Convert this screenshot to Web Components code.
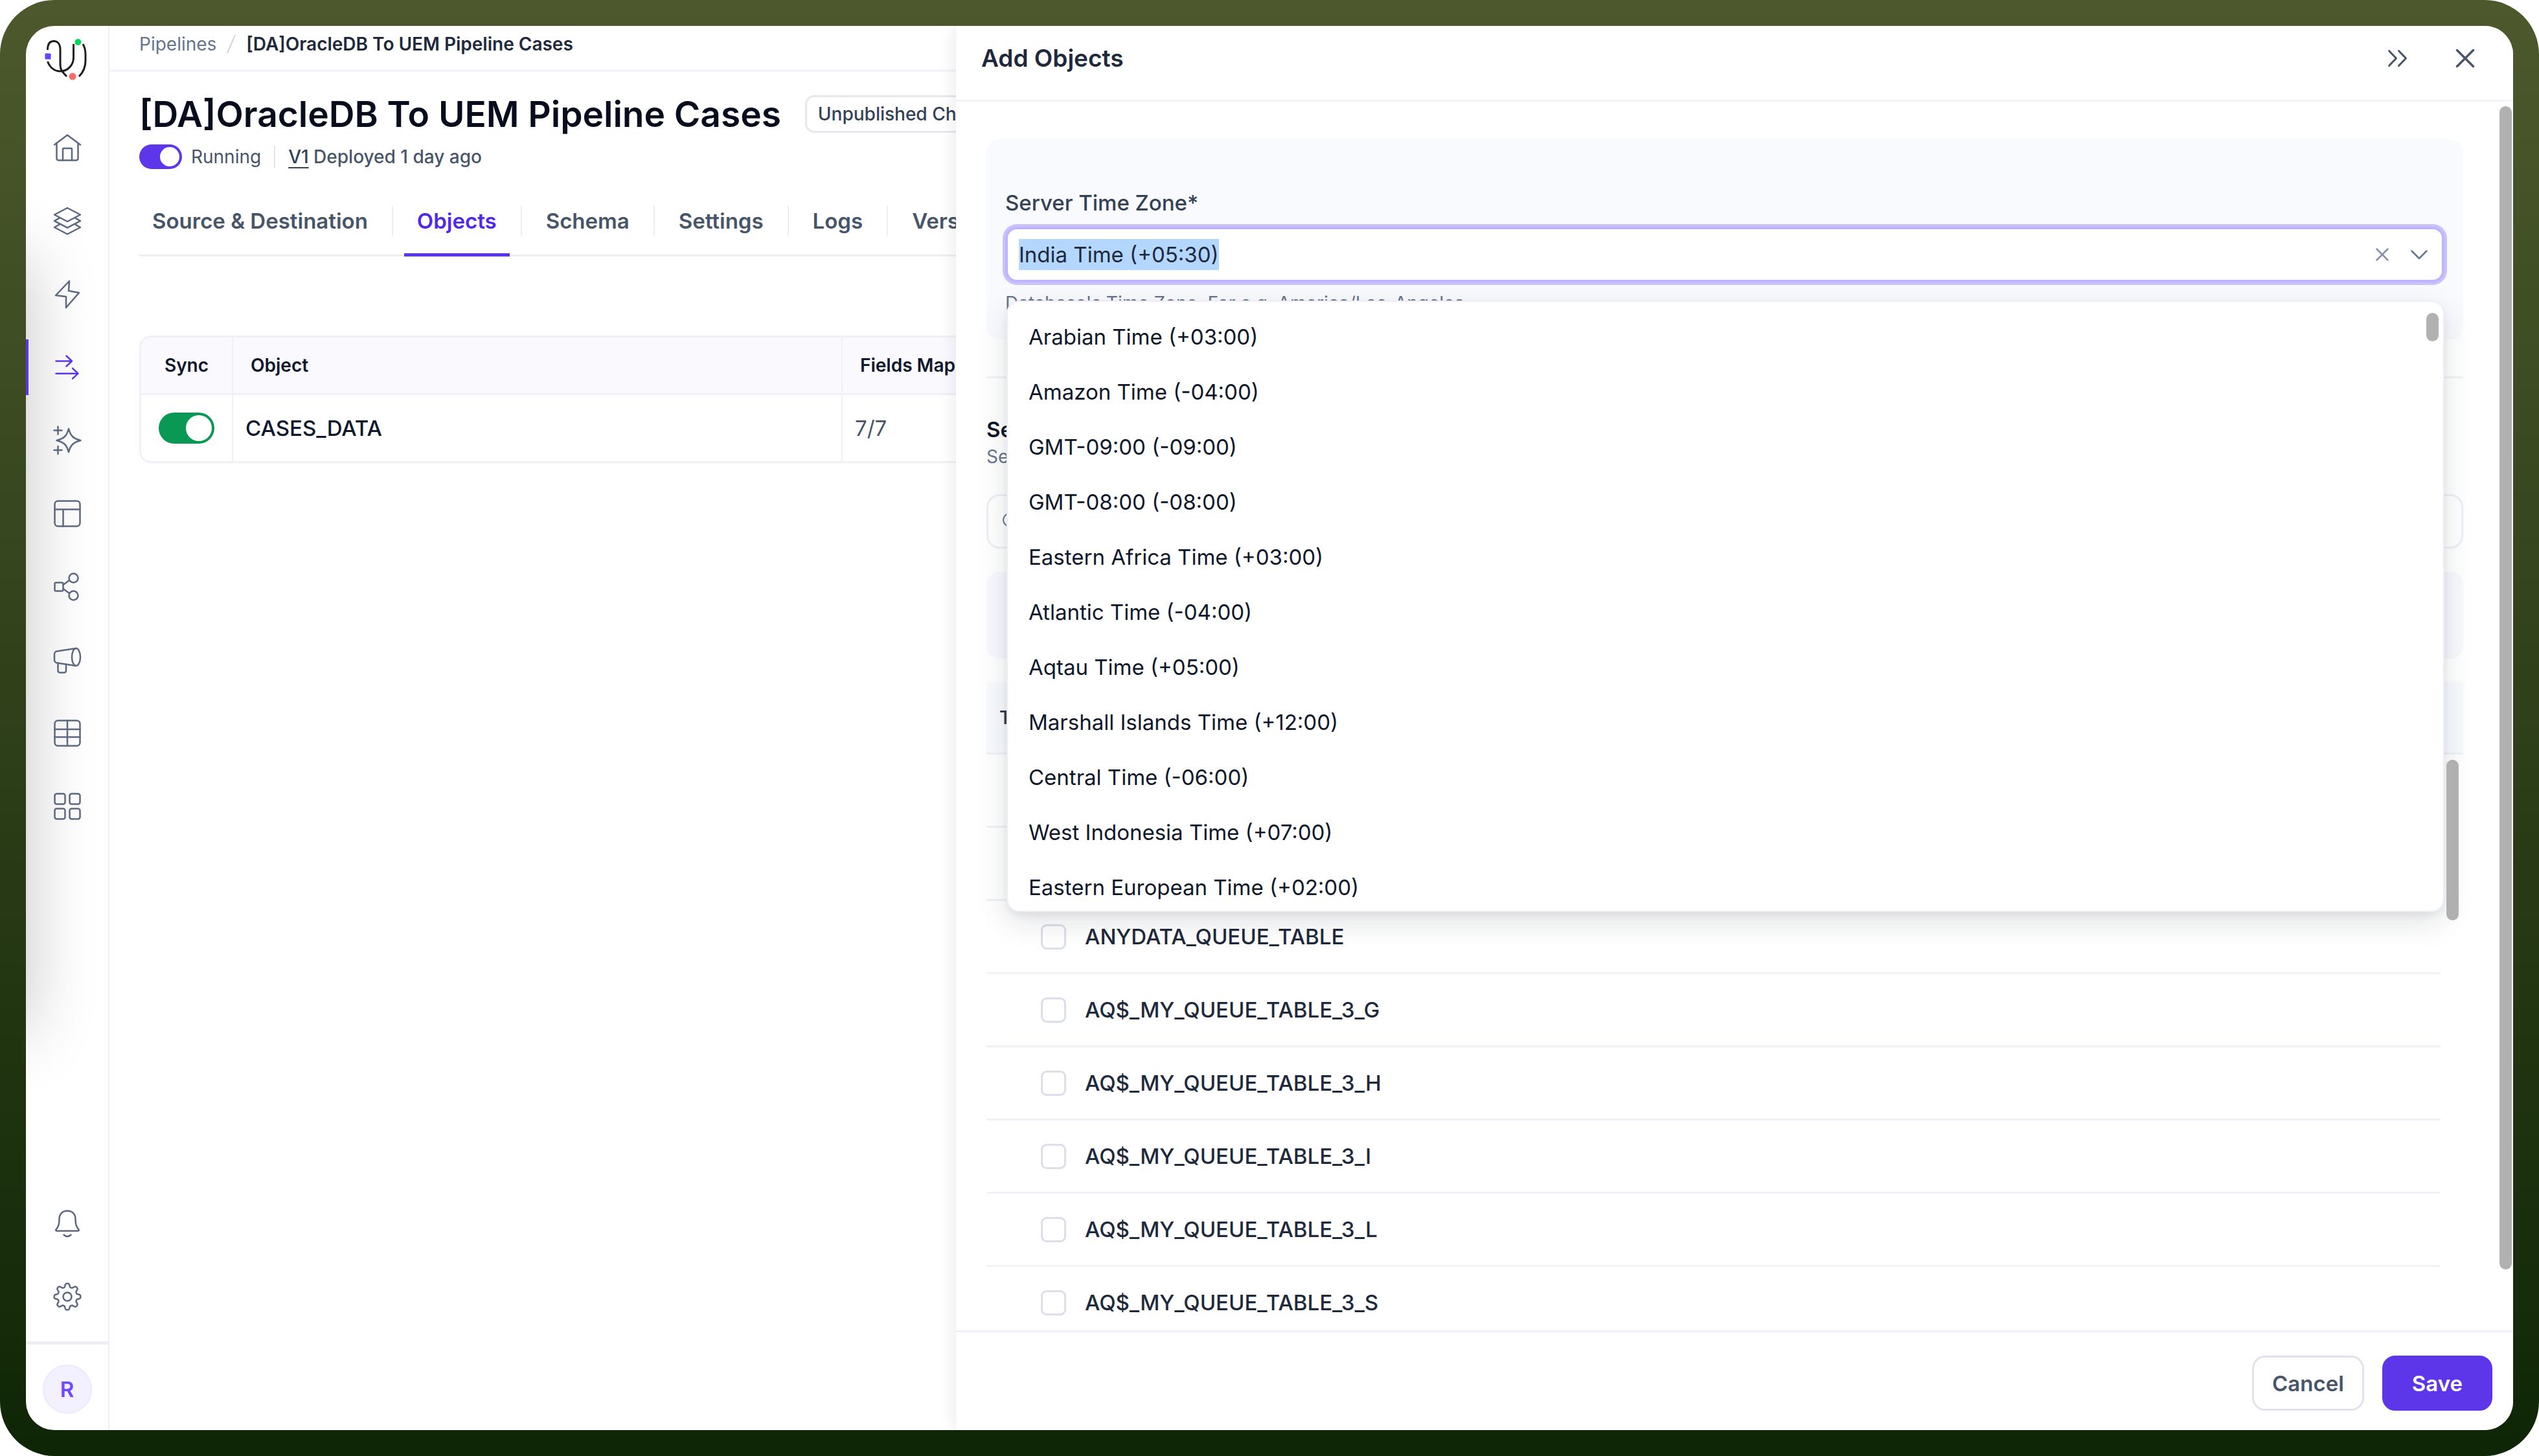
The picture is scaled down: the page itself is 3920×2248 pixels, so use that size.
<!DOCTYPE html>
<html lang="en">
<head>
<meta charset="utf-8">
<title>Pipelines</title>
<style>
  html, body {
    margin: 0;
    height: 100%;
    background: #ffffff;
  }

  body {
    font-family: Inter, "Liberation Sans", sans-serif;
    color: #0f172a;
  }
</style>
</head>
<body>
<app-frame>
  <nav-rail slot="nav"></nav-rail>
  <pipeline-page></pipeline-page>
  <objects-drawer slot="drawer"></objects-drawer>
</app-frame>

<script>
// Outline of the settings cog: a circle whose radius swells eight times
function cogPath() {
  const points = [];
  for (let i = 0; i < 160; i++) {
    const a = (i / 160) * Math.PI * 2;
    const r = 17.7 + 2.8 * Math.tanh(1.8 * Math.cos(8 * a));
    points.push(`${(24 + r * Math.sin(a)).toFixed(2)} ${(24 - r * Math.cos(a)).toFixed(2)}`);
  }
  return `M${points.join('L')}Z`;
}

const ICONS = {
  home: '<path d="M4 19.5 24 4.5 44 19.5"/><path d="M7.5 17v23.5a3 3 0 0 0 3 3h27a3 3 0 0 0 3-3V17"/><path d="M17 43.5V26a1 1 0 0 1 1-1h12a1 1 0 0 1 1 1v17.5"/>',
  layers: '<path d="M24 4 44 14.5 24 25 4 14.5Z"/><path d="M12 19.5 4 24.2l20 10.5 20-10.5-8-4.7"/><path d="M12 29.3 4 34l20 10.5L44 34l-8-4.7"/>',
  bolt: '<path d="M27 4 6 26l16 2v17l20-23-16-3Z"/>',
  flow: '<path d="M6.5 14.5H31M22.5 6.5l8.5 8-8.5 8M6.5 33.7h34M32 25.7l8.5 8-8.5 8"/>',
  sparkle: '<path d="M26 6c3 11 7 15 18.5 18C33 27 29 31 26 42c-3-11-7-15-18.5-18C19 21 23 17 26 6Z"/><path d="M3.5 8.5h12M9.5 2.5v12M3.5 39h12M9.5 33v12"/>',
  layout: '<rect x="4.5" y="4.5" width="39" height="39" rx="5"/><path d="M4.5 17.5h39M17.5 17.5v26"/>',
  share: '<rect x="4.5" y="17.5" width="13" height="13" rx="2"/><circle cx="33.5" cy="10.5" r="7"/><circle cx="33.5" cy="37.5" r="7"/><path d="M17.5 21 27 14M17.5 27l9.5 7"/>',
  megaphone: '<ellipse cx="37.5" cy="19.5" rx="6.5" ry="13.5"/><path d="M37.5 6 8 10.5a4.5 4.5 0 0 0-4 4.5v9a4.5 4.5 0 0 0 4 4.5L37.5 33"/><path d="M9.5 28.7V40.5a3 3 0 0 0 3 3h6.5a3 3 0 0 0 3-3V30.7"/>',
  table: '<rect x="4.5" y="4.5" width="39" height="39" rx="5"/><path d="M4.5 18h39M4.5 30h39M24 4.5v39"/>',
  grid: '<rect x="4.5" y="4.5" width="16" height="16" rx="3"/><rect x="27.5" y="4.5" width="16" height="16" rx="3"/><rect x="4.5" y="27.5" width="16" height="16" rx="3"/><rect x="27.5" y="27.5" width="16" height="16" rx="3"/>',
  bell: '<path d="M24 4.5c-8 0-12.5 5.5-12.5 13 0 9-2 12-5 16-.6.9-.2 2 1 2h33c1.200 0 1.600-1.100 1-2-3-4-5-7-5-16 0-7.500-4.500-13-12.500-13Z"/><path d="M18.500 41.500q5.500 5 11 0"/>',
  gear: `<path d="${cogPath()}"/><circle cx="24" cy="24" r="6.5"/>`,
  expand: '<path d="M10.5 12.5 21.5 24 10.5 35.5M25.5 12.5 36.5 24 25.5 35.5" stroke-width="3"/>',
  close: '<path d="M11.5 11.5l25 25M36.5 11.5l-25 25" stroke-width="3.5"/>',
  clear: '<path d="M15.5 15.5l17 17M32.5 15.5l-17 17"/>',
  chevron: '<path d="M12.5 18.5 24 30l11.5-11.5"/>',
  search: '<circle cx="21" cy="21" r="13"/><path d="M31 31l11 11"/>'
};

class UiIcon extends HTMLElement {
  constructor() {
    super();
    this.attachShadow({ mode: 'open' });
  }

  connectedCallback() {
    this.shadowRoot.innerHTML = `
      <style>
        :host {
          display: inline-flex;
          width: 48px;
          height: 48px;
          flex: none;
        }

        svg {
          width: 100%;
          height: 100%;
          fill: none;
          stroke: currentColor;
          stroke-width: 2.5;
          stroke-linecap: round;
          stroke-linejoin: round;
        }
      </style>
      <svg viewBox="0 0 48 48" aria-hidden="true">${ICONS[this.getAttribute('name')]}</svg>
    `;
  }
}

class AppFrame extends HTMLElement {
  constructor() {
    super();
    this.attachShadow({ mode: 'open' });
    this.shadowRoot.innerHTML = `
      <style>
        :host {
          display: block;
          box-sizing: border-box;
          height: 100vh;
          padding: 40px;
          border-radius: 84px;
          background: linear-gradient(#4d592c, #0f2606);
        }

        .window {
          position: relative;
          display: flex;
          height: 100%;
          border-radius: 44px;
          background: #ffffff;
          overflow: hidden;
        }

        main {
          flex: 1;
          min-width: 0;
        }
      </style>
      <div class="window">
        <slot name="nav"></slot>
        <main><slot></slot></main>
        <slot name="drawer"></slot>
      </div>
    `;
  }
}

class NavRail extends HTMLElement {
  constructor() {
    super();
    this.attachShadow({ mode: 'open' });
  }

  connectedCallback() {
    const items = [
      ['home', 'Home'], ['layers', 'Models'], ['bolt', 'Activations'], ['flow', 'Pipelines'],
      ['sparkle', 'AI'], ['layout', 'Layouts'], ['share', 'Connections'], ['megaphone', 'Campaigns'],
      ['table', 'Tables'], ['grid', 'Apps']
    ];

    const link = ([icon, label]) => `
      <a href="#${icon}" aria-label="${label}" class="${icon === 'flow' ? 'active' : ''}">
        <ui-icon name="${icon}"></ui-icon>
      </a>`;

    this.shadowRoot.innerHTML = `
      <style>
        :host {
          position: relative;
          display: flex;
          flex-direction: column;
          flex: none;
          box-sizing: border-box;
          width: 129px;
          border-right: 2px solid #eeeff6;
          overflow: hidden;
        }

        /* soft shade cast along the left edge */
        :host::before {
          content: "";
          position: absolute;
          left: -200px;
          top: 360px;
          width: 200px;
          height: 1190px;
          box-shadow: 0 0 110px rgba(0, 0, 0, 0.24);
        }

        .logo {
          display: flex;
          padding: 18px 0 0 26px;
          height: 113px;
        }

        .logo svg {
          width: 72px;
          height: 68px;
        }

        nav {
          position: relative;
          display: flex;
          flex-direction: column;
        }

        nav.bottom {
          margin-top: auto;
          padding-bottom: 13px;
        }

        a {
          display: flex;
          align-items: center;
          justify-content: center;
          height: 113px;
          color: #5b6880;
        }

        a.active {
          color: #5d36ea;
        }

        a.active::before {
          content: "";
          position: absolute;
          left: 0;
          width: 4px;
          height: 86px;
          background: #5d36ea;
        }

        .account {
          display: flex;
          justify-content: center;
          padding: 31px 0 25px;
          border-top: 5px solid #eeeff4;
        }

        button {
          box-sizing: border-box;
          width: 76px;
          height: 76px;
          padding: 0;
          border: 2px solid #ece9fe;
          border-radius: 50%;
          background: #f3f1ff;
          color: #6d4aff;
          font: 600 33px/40px Inter, sans-serif;
        }
      </style>
      <div class="logo">
        <svg viewBox="66 58 72 68" fill="none" stroke="#1c1c1c" stroke-width="3" role="img" aria-label="Logo">
          <path d="M73.5 77C73.5 67 77 63.5 83 63.5S93 68 93 77V100C93 108 97 112 103 118"/>
          <path d="M73.5 95C77 104 84 110 93 110C105 110 113.5 100 113.5 89V68"/>
          <path d="M128 68C131 73 132 78 132 84V94C132 104 128 112 122 118"/>
          <circle cx="120.5" cy="65" r="5" fill="#0bd75f" stroke="none"/>
          <rect x="69.5" y="82.5" width="9" height="9" fill="#5f45ff" stroke="none"/>
          <circle cx="112" cy="118" r="5.5" fill="#ff6b6b" stroke="none"/>
        </svg>
      </div>
      <nav aria-label="Main">${items.map(link).join('')}</nav>
      <nav class="bottom" aria-label="Account">
        ${link(['bell', 'Notifications'])}
        ${link(['gear', 'Settings'])}
      </nav>
      <div class="account"><button type="button">R</button></div>
    `;
  }
}

class UiSwitch extends HTMLElement {
  constructor() {
    super();
    this.attachShadow({ mode: 'open' });
  }

  connectedCallback() {
    this.shadowRoot.innerHTML = `
      <style>
        :host {
          display: inline-flex;
          --w: 66px;
          --h: 38px;
          --on: #5d36ea;
        }

        :host([size="large"]) {
          --w: 86px;
          --h: 48px;
          --on: #0a9955;
        }

        label {
          display: inline-flex;
          align-items: center;
          gap: 14px;
          font-size: 28px;
          line-height: 40px;
        }

        input {
          appearance: none;
          display: flex;
          box-sizing: border-box;
          justify-content: flex-end;
          width: var(--w);
          height: var(--h);
          margin: 0;
          padding: 4px;
          border-radius: 24px;
          background: var(--on);
        }

        input::before {
          content: "";
          height: 100%;
          aspect-ratio: 1;
          border-radius: 50%;
          background: #ffffff;
        }
      </style>
      <label>
        <input type="checkbox" role="switch" checked aria-label="${this.getAttribute('label')}">
        <slot></slot>
      </label>
    `;
  }
}

class TabBar extends HTMLElement {
  constructor() {
    super();
    this.attachShadow({ mode: 'open' });
  }

  connectedCallback() {
    const active = this.getAttribute('active');
    const tabs = this.getAttribute('tabs').split('|');

    this.shadowRoot.innerHTML = `
      <style>
        :host {
          display: flex;
          align-items: flex-start;
          height: 91px;
          border-bottom: 3px solid #eeeef6;
        }

        a {
          box-sizing: border-box;
          height: 94px;
          padding: 19px 20px 0;
          font-weight: 600;
          font-size: 33px;
          line-height: 40px;
          color: #475569;
          text-decoration: none;
          white-space: nowrap;
        }

        a.active {
          color: #5029e8;
          border-bottom: 5px solid #5d36ea;
        }

        i {
          width: 2px;
          height: 46px;
          margin: 16px 17px 0;
          background: #ecedf5;
        }
      </style>
      ${tabs.map((t) => `<a href="#" class="${t === active ? 'active' : ''}">${t.replace('&', '&amp;')}</a>`).join('<i></i>')}
    `;
  }
}

class PipelinePage extends HTMLElement {
  constructor() {
    super();
    this.attachShadow({ mode: 'open' });
    this.shadowRoot.innerHTML = `
      <style>
        :host {
          display: block;
        }

        .crumbs {
          display: flex;
          align-items: center;
          gap: 15px;
          height: 67px;
          padding: 0 0 11px 46px;
          box-sizing: border-box;
          font-size: 28px;
          line-height: 40px;
          white-space: nowrap;
        }

        .crumbs a {
          color: #64748b;
          text-decoration: none;
        }

        .crumbs svg {
          width: 16px;
          height: 30px;
          stroke: #d0d5e0;
          stroke-width: 2;
        }

        .crumbs strong {
          font-weight: 600;
          color: #1e293b;
        }

        .body {
          padding: 32px 46px 0;
          border-top: 4px solid #f3f5fa;
        }

        .title {
          display: flex;
          align-items: center;
          gap: 37px;
          white-space: nowrap;
        }

        h1 {
          margin: 0;
          font-weight: 600;
          font-size: 55px;
          line-height: 66px;
          color: #070d1c;
        }

        .chip {
          padding: 6px 17px;
          border: 3px solid #e6e7f0;
          border-radius: 14px;
          font-weight: 500;
          font-size: 28px;
          line-height: 40px;
          color: #334155;
        }

        .status {
          display: flex;
          align-items: center;
          gap: 20px;
          height: 40px;
          margin: 13px 0 40px;
          font-size: 28px;
          line-height: 40px;
          color: #475569;
        }

        .status i {
          width: 2px;
          height: 34px;
          background: #e2e6f0;
        }

        .status p {
          margin: 0;
          font-weight: 500;
        }

        .status a {
          color: #334155;
          text-underline-offset: 6px;
        }

        .grid {
          margin-top: 122px;
          border: 3px solid #f0f0f7;
          border-radius: 18px;
          overflow: hidden;
        }

        table {
          width: 100%;
          border-collapse: collapse;
          table-layout: fixed;
        }

        col.sync {
          width: 141px;
        }

        col.object {
          width: 941px;
        }

        th {
          height: 87px;
          box-sizing: border-box;
          padding: 0 27px;
          background: #f9f9fe;
          border-bottom: 3px solid #f0f0f7;
          font-weight: 600;
          font-size: 28px;
          line-height: 40px;
          text-align: left;
        }

        td {
          height: 104px;
          box-sizing: border-box;
          padding: 0 19px;
          font-size: 33px;
          line-height: 40px;
        }

        th + th,
        td + td {
          border-left: 2px solid #f0f0f7;
        }

        th:first-child,
        td:first-child {
          padding: 0;
          text-align: center;
        }

        td:first-child ui-switch {
          vertical-align: middle;
        }

        td.name {
          font-weight: 500;
        }

        td.count {
          color: #475569;
        }
      </style>
      <nav class="crumbs" aria-label="Breadcrumb">
        <a href="#pipelines">Pipelines</a>
        <svg viewBox="0 0 16 30"><path d="M14 1 2 29"/></svg>
        <strong>[DA]OracleDB To UEM Pipeline Cases</strong>
      </nav>
      <div class="body">
        <div class="title">
          <h1>[DA]OracleDB To UEM Pipeline Cases</h1>
          <span class="chip">Unpublished Changes</span>
        </div>
        <div class="status">
          <ui-switch label="Running">Running</ui-switch>
          <i></i>
          <p><a href="#v1">V1</a> Deployed 1 day ago</p>
        </div>
        <tab-bar tabs="Source &amp; Destination|Objects|Schema|Settings|Logs|Versions" active="Objects"></tab-bar>
        <div class="grid">
          <table>
            <colgroup><col class="sync"><col class="object"><col></colgroup>
            <thead>
              <tr><th>Sync</th><th>Object</th><th>Fields Mapped</th></tr>
            </thead>
            <tbody>
              <tr>
                <td><ui-switch size="large" label="Sync CASES_DATA"></ui-switch></td>
                <td class="name">CASES_DATA</td>
                <td class="count">7/7</td>
              </tr>
            </tbody>
          </table>
        </div>
      </div>
    `;
  }
}

class TimezoneField extends HTMLElement {
  constructor() {
    super();
    this.attachShadow({ mode: 'open' });
  }

  connectedCallback() {
    this.render();
    this.setupEventListeners();
  }

  render() {
    const zones = [
      'Arabian Time (+03:00)', 'Amazon Time (-04:00)', 'GMT-09:00 (-09:00)', 'GMT-08:00 (-08:00)',
      'Eastern Africa Time (+03:00)', 'Atlantic Time (-04:00)', 'Aqtau Time (+05:00)',
      'Marshall Islands Time (+12:00)', 'Central Time (-06:00)', 'West Indonesia Time (+07:00)',
      'Eastern European Time (+02:00)'
    ];

    this.shadowRoot.innerHTML = `
      <style>
        :host {
          display: block;
          padding: 78px 29px 36px;
          border-radius: 20px;
          background: #f9fafe;
        }

        label {
          display: block;
          margin-bottom: 17px;
          font-weight: 500;
          font-size: 33px;
          line-height: 40px;
          color: #334155;
        }

        .control {
          position: relative;
          display: flex;
          align-items: center;
          gap: 9px;
          box-sizing: border-box;
          height: 86px;
          padding: 0 11px 0 17px;
          border: 4px solid #beb6fb;
          border-radius: 18px;
          background: #ffffff;
          box-shadow: 0 0 0 4px #c9c2fc;
        }

        input {
          flex: 1;
          min-width: 0;
          height: 48px;
          padding: 0;
          border: 0;
          outline: 0;
          background: none;
          color: #1e293b;
          font: 400 33px/48px Inter, sans-serif;
        }

        input::selection {
          background: #b3d7ff;
          color: #1e293b;
        }

        button {
          display: flex;
          padding: 0;
          border: 0;
          background: none;
          color: #64748b;
        }

        #clear {
          color: #8490a3;
        }

        .help {
          margin: 12px 0 0;
          font-size: 28px;
          line-height: 40px;
          color: #64748b;
        }

        .menu {
          position: absolute;
          z-index: 2;
          top: 110px;
          left: -2px;
          right: -4px;
          box-sizing: border-box;
          height: 944px;
          padding: 12px 0 0;
          border: 2px solid #eeeef6;
          border-radius: 20px;
          background: #ffffff;
          box-shadow: 0 16px 48px rgba(15, 23, 42, 0.12), 0 6px 12px rgba(15, 23, 42, 0.06);
          overflow: hidden;
        }

        .menu ul {
          margin: 0;
          padding: 0;
          list-style: none;
        }

        .menu li {
          padding: 0 32px;
          font-size: 33px;
          line-height: 85px;
          color: #0f172a;
        }

        .thumb {
          position: absolute;
          top: 17px;
          right: 7px;
          width: 19px;
          height: 44px;
          border-radius: 10px;
          background: #b1b1b1;
        }
      </style>
      <label for="zone">Server Time Zone*</label>
      <div class="control">
        <input id="zone" type="text" role="combobox" aria-expanded="true" aria-controls="zones" value="India Time (+05:30)">
        <button type="button" id="clear" aria-label="Clear"><ui-icon name="clear"></ui-icon></button>
        <button type="button" id="toggle" aria-label="Toggle list"><ui-icon name="chevron"></ui-icon></button>
        <div class="menu">
          <ul id="zones" role="listbox">
            ${zones.map((z) => `<li role="option">${z}</li>`).join('')}
          </ul>
          <span class="thumb"></span>
        </div>
      </div>
      <p class="help">Database's Time Zone. For e.g. America/Los_Angeles</p>
    `;
  }

  setupEventListeners() {
    const input = this.shadowRoot.querySelector('#zone');
    const menu = this.shadowRoot.querySelector('.menu');

    this.shadowRoot.querySelector('#clear').addEventListener('click', () => {
      input.value = '';
      input.focus();
    });

    this.shadowRoot.querySelector('#toggle').addEventListener('click', () => {
      menu.hidden = !menu.hidden;
    });

    menu.addEventListener('click', (e) => {
      if (e.target.matches('li')) {
        input.value = e.target.textContent;
      }
    });

    input.focus();
    input.select();
  }
}

class ObjectTable extends HTMLElement {
  constructor() {
    super();
    this.attachShadow({ mode: 'open' });
  }

  connectedCallback() {
    const names = [
      '', '', 'ANYDATA_QUEUE_TABLE', 'AQ$_MY_QUEUE_TABLE_3_G', 'AQ$_MY_QUEUE_TABLE_3_H',
      'AQ$_MY_QUEUE_TABLE_3_I', 'AQ$_MY_QUEUE_TABLE_3_L', 'AQ$_MY_QUEUE_TABLE_3_S'
    ];

    this.shadowRoot.innerHTML = `
      <style>
        :host {
          position: relative;
          display: block;
        }

        table {
          width: 100%;
          border-collapse: separate;
          border-spacing: 0;
          table-layout: fixed;
        }

        col.gutter {
          width: 35px;
        }

        th {
          box-sizing: border-box;
          height: 112px;
          padding: 0 20px;
          border-bottom: 3px solid #eef0f8;
          background: #f8fafe;
          font-weight: 600;
          font-size: 28px;
          line-height: 40px;
          text-align: left;
          color: #334155;
        }

        td {
          box-sizing: border-box;
          height: 113px;
          padding: 0;
        }

        td:first-child {
          padding-left: 84px;
          border-bottom: 3px solid #f1f1f7;
        }

        label {
          display: flex;
          align-items: center;
          gap: 29px;
          font-weight: 500;
          font-size: 33px;
          line-height: 40px;
          color: #1e293b;
        }

        input {
          appearance: none;
          box-sizing: border-box;
          width: 39px;
          height: 39px;
          margin: 0;
          border: 3px solid #dcdfe9;
          border-radius: 9px;
          background: #ffffff;
        }

        .thumb {
          position: absolute;
          top: 120px;
          right: 7px;
          width: 19px;
          height: 248px;
          border-radius: 10px;
          background: #b0b0b0;
          z-index: 3;
        }
      </style>
      <table>
        <colgroup><col><col class="gutter"></colgroup>
        <thead><tr><th colspan="2">Table</th></tr></thead>
        <tbody>
          ${names.map((n) => `<tr><td><label><input type="checkbox">${n}</label></td><td></td></tr>`).join('')}
        </tbody>
      </table>
      <span class="thumb"></span>
    `;
  }
}

class ObjectsDrawer extends HTMLElement {
  constructor() {
    super();
    this.attachShadow({ mode: 'open' });
    this.shadowRoot.innerHTML = `
      <style>
        :host {
          position: absolute;
          inset: 0 0 0 1436px;
          display: flex;
          flex-direction: column;
          background: #ffffff;
          box-shadow: 0 0 26px rgba(15, 23, 42, 0.1);
        }

        header {
          display: flex;
          align-items: center;
          gap: 56px;
          height: 114px;
          box-sizing: border-box;
          padding: 0 50px 14px 39px;
        }

        h2 {
          flex: 1;
          margin: 0;
          font-weight: 600;
          font-size: 37px;
          line-height: 40px;
          color: #1e293b;
        }

        button.icon {
          display: flex;
          padding: 0;
          border: 0;
          background: none;
          color: #475569;
        }

        .body {
          position: relative;
          flex: 1;
          min-height: 0;
          padding: 58px 77px 0 47px;
          border-top: 3px solid #f1f3f8;
          border-bottom: 3px solid #f0f1f8;
          overflow: hidden;
        }

        .body > .thumb {
          position: absolute;
          top: 7px;
          right: 2px;
          width: 19px;
          height: 1796px;
          border-radius: 10px;
          background: #b1b1b1;
        }

        hr {
          height: 3px;
          margin: 57px 0 59px;
          border: 0;
          background: #f2f2f8;
        }

        h3 {
          margin: 0;
          font-weight: 600;
          font-size: 33px;
          line-height: 40px;
        }

        .sub {
          margin: 2px 0 38px;
          font-size: 28px;
          line-height: 40px;
          color: #64748b;
        }

        .search {
          display: flex;
          align-items: center;
          gap: 12px;
          box-sizing: border-box;
          height: 84px;
          padding: 0 17px;
          border: 3px solid #eeeef6;
          border-radius: 20px;
          color: #64748b;
        }

        .search ui-icon {
          width: 36px;
          height: 36px;
        }

        .search input {
          flex: 1;
          border: 0;
          outline: 0;
          font: 400 33px/40px Inter, sans-serif;
        }

        .notice {
          height: 134px;
          margin: 36px 0;
          border-radius: 20px;
          background: #f8f8fe;
        }

        footer {
          display: flex;
          justify-content: flex-end;
          gap: 28px;
          padding: 36px 32px 30px;
        }

        footer button {
          box-sizing: border-box;
          height: 85px;
          padding: 0 28px;
          border: 3px solid #e0e3ec;
          border-radius: 20px;
          background: #ffffff;
          color: #475569;
          font: 600 33px/40px Inter, sans-serif;
        }

        footer button.primary {
          padding: 0 43px;
          border-color: #5d36ea;
          background: #5d36ea;
          color: #ffffff;
        }
      </style>
      <header>
        <h2>Add Objects</h2>
        <button type="button" class="icon" aria-label="Collapse"><ui-icon name="expand"></ui-icon></button>
        <button type="button" class="icon" aria-label="Close"><ui-icon name="close"></ui-icon></button>
      </header>
      <div class="body">
        <timezone-field></timezone-field>
        <hr>
        <h3>Select Objects</h3>
        <p class="sub">Select objects</p>
        <label class="search">
          <ui-icon name="search"></ui-icon>
          <input type="search" aria-label="Search">
        </label>
        <div class="notice"></div>
        <object-table></object-table>
        <span class="thumb"></span>
      </div>
      <footer>
        <button type="button">Cancel</button>
        <button type="button" class="primary">Save</button>
      </footer>
    `;
  }
}

customElements.define('ui-icon', UiIcon);
customElements.define('ui-switch', UiSwitch);
customElements.define('tab-bar', TabBar);
customElements.define('app-frame', AppFrame);
customElements.define('nav-rail', NavRail);
customElements.define('pipeline-page', PipelinePage);
customElements.define('timezone-field', TimezoneField);
customElements.define('object-table', ObjectTable);
customElements.define('objects-drawer', ObjectsDrawer);
</script>
</body>
</html>
